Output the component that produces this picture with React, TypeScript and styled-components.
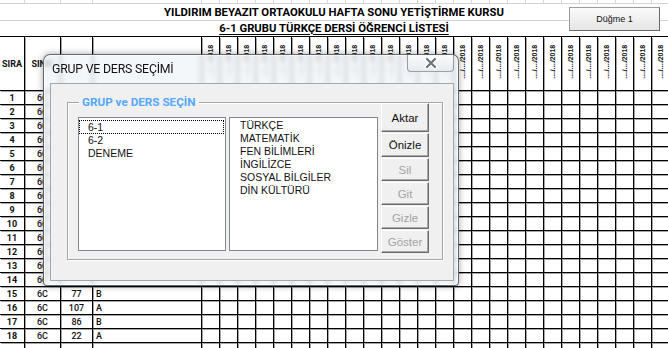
import React from 'react';
import styled, { createGlobalStyle } from 'styled-components';

const GlobalStyle = createGlobalStyle`
  html, body {
    margin: 0;
    padding: 0;
    background: #fff;
    overflow: hidden;
  }
  body {
    font-family: "Liberation Sans", Arial, sans-serif;
  }
`;

const COLS = '25px 36px 32px 109px repeat(26, 18px)';
const DATE_COLS = 26;

const Page = styled.div`
  position: relative;
  width: 668px;
  height: 348px;
  overflow: hidden;
  background: #fff;
`;

const Sheet = styled.div`
  display: flex;
  flex-direction: column;
  width: 668px;
`;

const GridRow = styled.div<{ $h: number }>`
  display: grid;
  grid-template-columns: ${COLS};
  height: ${(p) => p.$h}px;
  width: max-content;
`;

const Cell = styled.div<{ $gray?: boolean; $align?: string; $bold?: boolean }>`
  box-sizing: border-box;
  border-right: 1px solid ${(p) => (p.$gray ? '#d4d4d4' : '#000')};
  border-bottom: 1px solid ${(p) => (p.$gray ? '#d4d4d4' : '#000')};
  box-shadow: ${(p) => (p.$gray ? 'none' : '1px 1px 0 rgba(0, 0, 0, 0.35)')};
  display: flex;
  align-items: center;
  justify-content: ${(p) => p.$align || 'center'};
  padding-left: ${(p) => (p.$align === 'flex-start' ? '3px' : '0')};
  font-family: Roboto, "Liberation Sans", sans-serif;
  font-size: 9px;
  font-weight: ${(p) => (p.$bold ? 700 : 500)};
  color: #111;
  overflow: hidden;
  white-space: nowrap;
`;

const TitleRow = styled.div<{ $h: number; $line: string }>`
  box-sizing: border-box;
  height: ${(p) => p.$h}px;
  border-bottom: 1px solid ${(p) => p.$line};
  display: flex;
  align-items: center;
  justify-content: center;
  font-family: Roboto, "Liberation Sans", sans-serif;
  font-size: 11.3px;
  font-weight: 700;
  color: #000;
  white-space: nowrap;
`;

const Underlined = styled.span`
  text-decoration: underline;
  text-underline-offset: 2px;
`;

const DateText = styled.span`
  writing-mode: vertical-rl;
  transform: rotate(180deg);
  font-family: "Liberation Sans", Arial, sans-serif;
  font-size: 7px;
  font-weight: 700;
  letter-spacing: -0.1px;
  margin-top: -4px;
`;

const SheetButton = styled.div`
  position: absolute;
  left: 569px;
  top: 7px;
  width: 91px;
  height: 24px;
  box-sizing: border-box;
  border: 1px solid #9a9a9a;
  border-right-color: #6a6a6a;
  border-bottom-color: #6a6a6a;
  background: linear-gradient(#fafafa, #e6e6e6);
  display: flex;
  align-items: center;
  justify-content: center;
  font-family: "Liberation Sans", Arial, sans-serif;
  font-size: 9px;
  color: #111;
`;

/* ---------- dialog ---------- */

const Dialog = styled.div`
  position: absolute;
  left: 43px;
  top: 54px;
  width: 416px;
  height: 232px;
  box-sizing: border-box;
  border: 1px solid rgba(50, 60, 70, 0.75);
  border-radius: 7px 7px 4px 4px;
  background: rgba(240, 244, 248, 0.72);
  backdrop-filter: blur(2.5px);
  box-shadow: 0 0 7px rgba(0, 0, 0, 0.35), inset 0 0 0 1px rgba(255, 255, 255, 0.7);
  padding: 0 4px 4px 6px;
  display: flex;
  flex-direction: column;
`;

const TitleBar = styled.div`
  height: 28px;
  display: flex;
  justify-content: space-between;
  align-items: flex-start;
`;

const TitleText = styled.span`
  line-height: 28px;
  padding-left: 2px;
  font-family: "Segoe UI", Roboto, "Liberation Sans", sans-serif;
  font-size: 12.3px;
  letter-spacing: -0.2px;
  color: #111;
`;

const CloseButton = styled.div`
  width: 47px;
  height: 17px;
  box-sizing: border-box;
  border: 1px solid rgba(60, 70, 80, 0.5);
  border-top: none;
  border-radius: 0 0 4px 4px;
  background: linear-gradient(rgba(255, 255, 255, 0.8), rgba(228, 233, 238, 0.8));
  display: flex;
  align-items: center;
  justify-content: center;
`;

const Client = styled.div`
  flex: 1;
  box-sizing: border-box;
  border: 1px solid #a0a7b0;
  background: #f0f0f0;
  padding: 18px 10px 20px 16px;
  display: flex;
`;

const GroupBox = styled.div`
  position: relative;
  flex: 1;
  box-sizing: border-box;
  border: 1px solid #a5a5a5;
  box-shadow: inset 1px 1px 0 #fff, 1px 1px 0 #fff;
  display: flex;
  padding: 0 12px 0 10px;
  gap: 3px;
`;

const Legend = styled.span`
  position: absolute;
  left: 11px;
  top: -9px;
  padding: 0 3px;
  background: #f0f0f0;
  font-family: "Segoe UI", Roboto, "Liberation Sans", sans-serif;
  font-size: 11.7px;
  font-weight: 700;
  color: #55a8ff;
  line-height: 16px;
`;

const ListBox = styled.div<{ $w: number }>`
  width: ${(p) => p.$w}px;
  height: 134px;
  margin-top: 14px;
  box-sizing: border-box;
  border: 1px solid #828790;
  background: #fff;
  padding: 1px 1px 0 0;
  font-family: "Liberation Sans", Arial, sans-serif;
  font-size: 10.5px;
  color: #111;
`;

const ListItem = styled.div<{ $focus?: boolean; $indent: number }>`
  height: ${(p) => (p.$focus ? 14 : 13)}px;
  line-height: ${(p) => (p.$focus ? 12 : 13)}px;
  box-sizing: border-box;
  border: ${(p) => (p.$focus ? '1px dotted #000' : 'none')};
  padding-left: ${(p) => (p.$focus ? p.$indent - 1 : p.$indent)}px;
  margin-top: ${(p) => (p.$focus ? 1 : 0)}px;
  white-space: nowrap;
`;

const ButtonColumn = styled.div`
  display: flex;
  flex-direction: column;
  gap: 1px;
`;

const ActionButton = styled.div<{ $h: number; $disabled?: boolean }>`
  width: 48px;
  height: ${(p) => p.$h}px;
  box-sizing: border-box;
  border: 1px solid;
  border-color: #fff #6b6b6b #6b6b6b #fff;
  box-shadow: inset -1px -1px 0 #a9a9a9;
  background: #f0f0f0;
  display: flex;
  align-items: center;
  justify-content: center;
  font-family: "Liberation Sans", Arial, sans-serif;
  font-size: 11.5px;
  color: ${(p) => (p.$disabled ? '#a3a3a3' : '#111')};
`;

// rows 1-14 sit under the dialog: only the class column peeks out
const rows: [string, string, string][] = [
  ...Array.from({ length: 14 }, () => ['6C', '', ''] as [string, string, string]),
  ['6C', '77', 'B'],
  ['6C', '107', 'A'],
  ['6C', '86', 'B'],
  ['6C', '22', 'A'],
  ['', '', ''],
];

const groups = ['6-1', '6-2', 'DENEME'];
const lessons = ['TÜRKÇE', 'MATEMATİK', 'FEN BİLİMLERİ', 'İNGİLİZCE', 'SOSYAL BİLGİLER', 'DİN KÜLTÜRÜ'];
const buttons: { label: string; h: number; disabled?: boolean }[] = [
  { label: 'Aktar', h: 29 },
  { label: 'Önizle', h: 24 },
  { label: 'Sil', h: 23, disabled: true },
  { label: 'Git', h: 23, disabled: true },
  { label: 'Gizle', h: 23, disabled: true },
  { label: 'Göster', h: 23, disabled: true },
];

const dateCols = Array.from({ length: DATE_COLS }, (_, i) => i);

const App: React.FC = () => (
  <Page>
    <GlobalStyle />
    <Sheet>
      <GridRow $h={4}>
        {Array.from({ length: DATE_COLS + 4 }, (_, i) => (
          <Cell key={i} $gray />
        ))}
      </GridRow>
      <TitleRow $h={17} $line="#d4d4d4">
        YILDIRIM BEYAZIT ORTAOKULU HAFTA SONU YETİŞTİRME KURSU
      </TitleRow>
      <TitleRow $h={16} $line="#000">
        <Underlined>6-1 GRUBU TÜRKÇE DERSİ ÖĞRENCİ LİSTESİ</Underlined>
      </TitleRow>
      <GridRow $h={54}>
        <Cell $bold>SIRA</Cell>
        <Cell $bold>SINIF</Cell>
        <Cell />
        <Cell />
        {dateCols.map((i) => (
          <Cell key={i}>
            <DateText>..../..../2018</DateText>
          </Cell>
        ))}
      </GridRow>
      {rows.map((r, idx) => (
        <GridRow $h={14} key={idx}>
          <Cell $bold>{r[0] ? idx + 1 : ''}</Cell>
          <Cell>{r[0]}</Cell>
          <Cell>{r[1]}</Cell>
          <Cell $align="flex-start">{r[2]}</Cell>
          {dateCols.map((i) => (
            <Cell key={i} />
          ))}
        </GridRow>
      ))}
    </Sheet>

    <SheetButton>Düğme 1</SheetButton>

    <Dialog>
      <TitleBar>
        <TitleText>GRUP VE DERS SEÇİMİ</TitleText>
        <CloseButton>
          <svg width="14" height="12" viewBox="0 0 14 12">
            <path d="M3 2 L11 10 M11 2 L3 10" stroke="#fff" strokeWidth="4.4" strokeLinecap="round" />
            <path d="M3 2 L11 10 M11 2 L3 10" stroke="#6f7378" strokeWidth="2.2" strokeLinecap="round" />
          </svg>
        </CloseButton>
      </TitleBar>
      <Client>
        <GroupBox>
          <Legend>GRUP ve DERS SEÇİN</Legend>
          <ListBox $w={148}>
            {groups.map((g, i) => (
              <ListItem key={g} $focus={i === 0} $indent={9}>
                {g}
              </ListItem>
            ))}
          </ListBox>
          <ListBox $w={149}>
            {lessons.map((l) => (
              <ListItem key={l} $indent={10}>
                {l}
              </ListItem>
            ))}
          </ListBox>
          <ButtonColumn>
            {buttons.map((b) => (
              <ActionButton key={b.label} $h={b.h} $disabled={b.disabled}>
                {b.label}
              </ActionButton>
            ))}
          </ButtonColumn>
        </GroupBox>
      </Client>
    </Dialog>
  </Page>
);

export default App;
